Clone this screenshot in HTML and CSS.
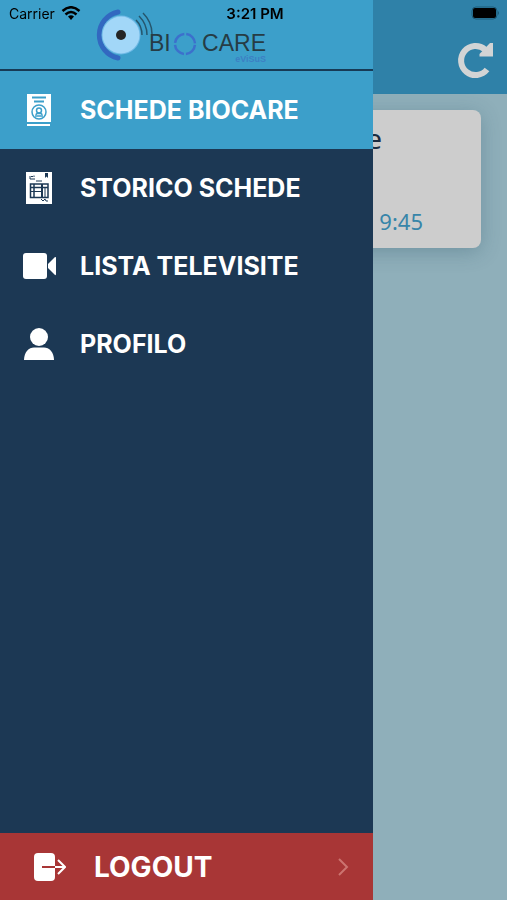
FILE: index.html
```html
<!DOCTYPE html>
<html lang="it">
<head>
  <meta charset="UTF-8">
  <meta name="viewport" content="width=device-width, initial-scale=1.0">
  <title>Biocare</title>
  <link rel="stylesheet" href="styles.css">
</head>
<body>
  <div class="page">
    <header class="topbar">
      <button class="refresh-btn" type="button" aria-label="Aggiorna">
        <svg width="38" height="38" viewBox="0 0 38 38">
          <path d="M30 28.500 A14.500 14.500 0 1 1 28 8.500" fill="none" stroke="#d2d4d5" stroke-width="6"/>
          <path d="M36 2 V15.500 H22.500 V13 L33 2 Z" fill="#d2d4d5"/>
        </svg>
      </button>
    </header>
    <main class="content">
      <article class="card">
        <h2 class="card-title">e</h2>
        <p class="card-time">9:45</p>
      </article>
    </main>
  </div>

  <aside class="drawer">
    <div class="drawer-header">
      <svg class="logo" width="172" height="54" viewBox="0 0 172 54" role="img" aria-label="Biocare eViSuS">
        <path d="M23 3 A23.500 23.500 0 0 0 23 49" fill="none" stroke="#3268c0" stroke-width="5" stroke-linecap="round"/>
        <circle cx="26" cy="26" r="19.500" fill="#6fb9e6"/>
        <circle cx="26" cy="26" r="18.500" fill="#a2d7f8"/>
        <circle cx="26" cy="26" r="5" fill="#252525"/>
        <g fill="none" stroke="#26566d" stroke-width="1.500">
          <path d="M41 11 Q47 17 47 26"/>
          <path d="M44 7 Q52 15 52 26"/>
          <path d="M48 4 Q57 13 57 25"/>
        </g>
        <circle cx="90" cy="35" r="10" fill="none" stroke="#3c70cc" stroke-width="2.500" stroke-dasharray="13.700 2" stroke-dashoffset="-1"/>
        <text class="logo-name" x="54" y="42">BI</text>
        <text class="logo-name" x="171" y="42" text-anchor="end">CARE</text>
        <text class="logo-sub" x="171" y="53" text-anchor="end">eViSuS</text>
      </svg>
    </div>

    <nav class="menu">
      <a href="#" class="menu-item active">
        <svg class="menu-icon" width="34" height="34" viewBox="0 0 34 34">
          <path d="M5 1 H29 V29 H5 Z M5 31 H28 V33 H5 Z" fill="#fff"/>
          <path d="M10 4.500 H24 M12 8.500 H22" stroke="#3c9fca" stroke-width="2"/>
          <circle cx="17" cy="19" r="7" fill="none" stroke="#3c9fca" stroke-width="1.500"/>
          <circle cx="17" cy="17.500" r="2.500" fill="none" stroke="#3c9fca" stroke-width="1.500"/>
          <path d="M14 24 V22 Q14 20.500 15.500 20.500 H18.500 Q20 20.500 20 22 V24 M15 23 H19" fill="none" stroke="#3c9fca" stroke-width="1.500"/>
        </svg>
        <span>SCHEDE BIOCARE</span>
      </a>
      <a href="#" class="menu-item">
        <svg class="menu-icon" width="34" height="34" viewBox="0 0 34 34">
          <path d="M4 1 H30 V33 H4 Z" fill="#fff"/>
          <g fill="none" stroke="#1c3854">
            <path d="M8 5 V8 H13 M9 5.500 H11 M12 4.500 V6" stroke-width="1"/>
            <path d="M23 2 H26 V7 L24.500 5.500 L23 7 Z" fill="#1c3854" stroke="none"/>
            <path d="M14 10 H20" stroke-width="1"/>
            <path d="M8.500 13 H26 V26.500 H8.500 Z M8.500 16.500 H26 M12 13 V26.500" stroke-width="1.500"/>
            <path d="M20 13 V26.500" stroke-width="2"/>
            <path d="M8.500 20.500 H19 M23 16.500 V26" stroke-width="1"/>
            <path d="M19 28 L21 30 L23 28 L24 30 H26" stroke-width="1"/>
          </g>
        </svg>
        <span>STORICO SCHEDE</span>
      </a>
      <a href="#" class="menu-item">
        <svg class="menu-icon" width="34" height="34" viewBox="0 0 34 34">
          <rect x="1" y="4" width="24" height="26" rx="3" fill="#fff"/>
          <path d="M26 15 L33 8 Q34 7.500 34 9 V25 Q34 26.500 33 26 L26 19 Z" fill="#fff"/>
        </svg>
        <span>LISTA TELEVISITE</span>
      </a>
      <a href="#" class="menu-item">
        <svg class="menu-icon" width="34" height="34" viewBox="0 0 34 34">
          <circle cx="17" cy="10" r="9" fill="#fff"/>
          <path d="M2 33 C2 25 7 20.500 12 20.500 H22 C27 20.500 32 25 32 33 Z" fill="#fff"/>
        </svg>
        <span>PROFILO</span>
      </a>
    </nav>

    <button class="logout-btn" type="button">
      <svg width="34" height="28" viewBox="0 0 34 28">
        <rect x="2" y="0" width="21" height="28" rx="4" fill="#fff"/>
        <path d="M10 14 H23" stroke="#a83636" stroke-width="2"/>
        <path d="M23 14 H33 M26 7 L33 14 L26 21" fill="none" stroke="#fff" stroke-width="2"/>
      </svg>
      <span class="logout-label">LOGOUT</span>
      <svg width="12" height="18" viewBox="0 0 12 18">
        <path d="M2 1 L10 9 L2 17" fill="none" stroke="#cc7470" stroke-width="2"/>
      </svg>
    </button>
  </aside>

  <div class="statusbar">
    <div class="carrier">
      <span>Carrier</span>
      <svg width="20" height="14" viewBox="0 0 20 14">
        <g fill="none" stroke="#000" stroke-width="2.500">
          <path d="M1.500 5 Q10 -2.500 18.500 5"/>
          <path d="M4.500 8.500 Q10 3.500 15.500 8.500"/>
        </g>
        <path d="M7 10.500 Q10 8 13 10.500 L10 14 Z"/>
      </svg>
    </div>
    <span class="clock">3:21 PM</span>
    <svg class="battery" width="30" height="14" viewBox="0 0 30 14">
      <rect x="1" y="1" width="25" height="12" rx="4" fill="none" stroke="#1d5a77" stroke-width="1"/>
      <rect x="2" y="2" width="23" height="10" rx="2" fill="#000"/>
      <path d="M27 5 Q29 7 27 9 Z" fill="#1d5a77"/>
    </svg>
  </div>
</body>
</html>
```
FILE: styles.css
```css
* {
  box-sizing: border-box;
}

body {
  margin: 0;
  font-family: Inter, "Liberation Sans", sans-serif;
  background-color: #8fafba;
}

.page {
  min-height: 100vh;
}

.topbar {
  display: flex;
  justify-content: flex-end;
  align-items: flex-end;
  height: 94px;
  padding: 0 12px 15px;
  background-color: #2f81a8;
}

.refresh-btn {
  display: flex;
  padding: 0;
  border: none;
  background: none;
  cursor: pointer;
}

.content {
  padding: 16px 26px;
}

.card {
  padding: 10px 16px 12px;
  min-height: 138px;
  display: flex;
  flex-direction: column;
  justify-content: space-between;
  align-items: flex-end;
  border-radius: 8px;
  background-color: #cdcdcd;
  box-shadow: 0 4px 20px rgba(40, 80, 100, 0.3);
  font-family: "Noto Sans", sans-serif;
}

.card-title {
  margin: 0;
  padding-right: 83px;
  font-size: 28px;
  font-weight: 400;
  line-height: 36px;
  color: #1c2c40;
}

.card-time {
  margin: 0;
  padding-right: 42px;
  font-size: 22px;
  line-height: 30px;
  color: #3785a9;
}

.drawer {
  position: fixed;
  top: 0;
  bottom: 0;
  left: 0;
  width: 73.5%;
  display: flex;
  flex-direction: column;
  background-color: #1c3854;
}

.drawer-header {
  display: flex;
  justify-content: center;
  padding: 9px 10px 6px 0;
  border-bottom: 2px solid #173a56;
  background-color: #3c9fca;
}

.logo-name {
  font-family: "Liberation Sans", sans-serif;
  font-size: 23px;
  fill: #263c45;
}

.logo-sub {
  font-family: "Liberation Sans", sans-serif;
  font-size: 9px;
  font-weight: 700;
  fill: #3c7fc4;
}

.menu {
  flex: 1;
}

.menu-item {
  display: flex;
  align-items: center;
  gap: 24px;
  height: 78px;
  padding: 0 22px;
  color: #fff;
  font-size: 25px;
  font-weight: 700;
  text-decoration: none;
}

.menu-item.active {
  background-color: #3c9fca;
}

.logout-btn {
  display: flex;
  align-items: center;
  gap: 28px;
  height: 67px;
  padding: 0 24px 0 32px;
  border: none;
  background-color: #a83636;
  color: #fff;
  font-family: inherit;
  font-size: 28px;
  font-weight: 700;
  cursor: pointer;
}

.logout-label {
  flex: 1;
  text-align: left;
}

.statusbar {
  position: fixed;
  top: 0;
  left: 0;
  right: 0;
  display: grid;
  grid-template-columns: 1fr auto 1fr;
  align-items: center;
  height: 26px;
  padding: 0 6px 0 9px;
  font-size: 14px;
  color: #000;
}

.carrier {
  display: flex;
  align-items: center;
  gap: 6px;
}

.clock {
  font-size: 15px;
  font-weight: 600;
}

.battery {
  justify-self: end;
}
```
